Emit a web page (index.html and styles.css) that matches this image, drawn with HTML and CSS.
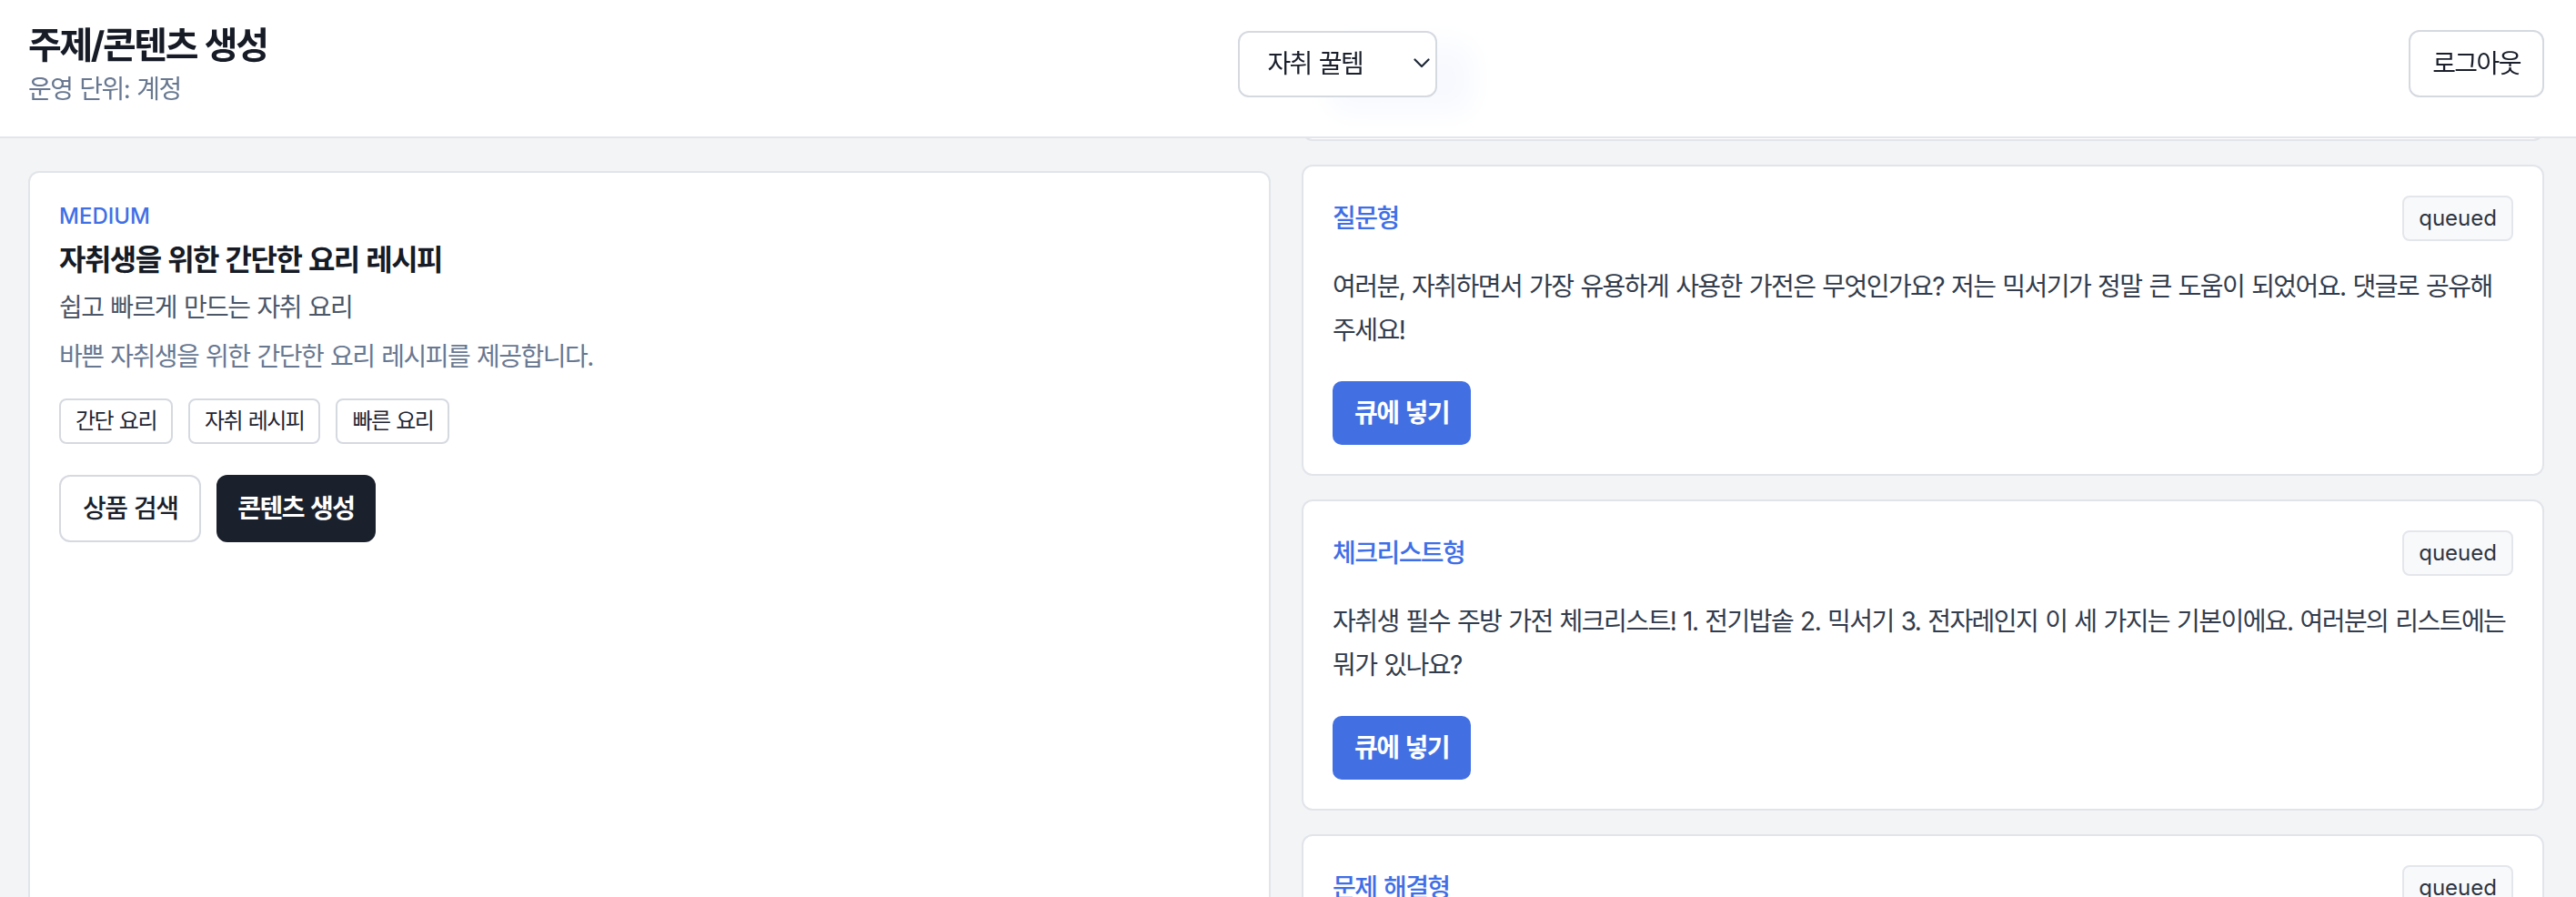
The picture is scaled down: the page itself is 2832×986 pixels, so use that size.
FILE: index.html
```html
<!DOCTYPE html>
<html lang="ko">
<head>
<meta charset="utf-8">
<title>주제/콘텐츠 생성</title>
<link rel="stylesheet" href="styles.css">
</head>
<body>
<header class="topbar">
  <div class="brand">
    <h1 class="page-title">주제/콘텐츠 생성</h1>
    <p class="page-meta">운영 단위: 계정</p>
  </div>
  <div class="picker">
    <select class="picker-select">
      <option>자취 꿀템</option>
    </select>
    <svg class="picker-caret" width="18" height="11" viewBox="0 0 18 11" aria-hidden="true"><path d="M1.5 1.5 9 9l7.5-7.5" fill="none" stroke="#1f2937" stroke-width="2.2" stroke-linecap="round" stroke-linejoin="round"/></svg>
  </div>
  <button class="btn btn-outline">로그아웃</button>
</header>

<main class="workspace">
  <section class="panel">
    <div class="level">MEDIUM</div>
    <h2 class="topic-title">자취생을 위한 간단한 요리 레시피</h2>
    <p class="topic-sub">쉽고 빠르게 만드는 자취 요리</p>
    <p class="topic-desc">바쁜 자취생을 위한 간단한 요리 레시피를 제공합니다.</p>
    <ul class="tags">
      <li class="tag">간단 요리</li>
      <li class="tag">자취 레시피</li>
      <li class="tag">빠른 요리</li>
    </ul>
    <div class="panel-actions">
      <button class="btn btn-outline btn-medium">상품 검색</button>
      <button class="btn btn-dark">콘텐츠 생성</button>
    </div>
  </section>

  <section class="feed">
    <article class="idea">
      <div class="idea-actions idea-actions-only"><button class="btn btn-primary">큐에 넣기</button></div>
    </article>

    <article class="idea">
      <div class="idea-head">
        <span class="idea-type">질문형</span>
        <span class="status">queued</span>
      </div>
      <p class="idea-text">여러분, 자취하면서 가장 유용하게 사용한 가전은 무엇인가요? 저는 믹서기가 정말 큰 도움이 되었어요. 댓글로 공유해 주세요!</p>
      <div class="idea-actions"><button class="btn btn-primary">큐에 넣기</button></div>
    </article>

    <article class="idea">
      <div class="idea-head">
        <span class="idea-type">체크리스트형</span>
        <span class="status">queued</span>
      </div>
      <p class="idea-text">자취생 필수 주방 가전 체크리스트! 1. 전기밥솥 2. 믹서기 3. 전자레인지 이 세 가지는 기본이에요. 여러분의 리스트에는 뭐가 있나요?</p>
      <div class="idea-actions"><button class="btn btn-primary">큐에 넣기</button></div>
    </article>

    <article class="idea">
      <div class="idea-head">
        <span class="idea-type">문제 해결형</span>
        <span class="status">queued</span>
      </div>
      <div class="idea-actions"><button class="btn btn-primary">큐에 넣기</button></div>
    </article>
  </section>
</main>
</body>
</html>
```

FILE: styles.css
```css
* {
  box-sizing: border-box;
}

html,
body {
  margin: 0;
  height: 100%;
}

body {
  font-family: "Inter", "Noto Sans CJK KR", sans-serif;
  background: #f3f4f6;
  color: #111827;
  letter-spacing: -1.55px;
  word-spacing: 1.6px;
  word-break: keep-all;
  overflow: hidden;
}

/* ---------- top bar ---------- */
.topbar {
  position: sticky;
  top: 0;
  z-index: 10;
  height: 152px;
  display: flex;
  align-items: center;
  justify-content: space-between;
  padding: 0 35px 10px 31px;
  background: rgba(255, 255, 255, 0.95);
  backdrop-filter: blur(16px);
  border-bottom: 2px solid #e3e5ea;
}

.page-title {
  margin: 0;
  font-size: 40px;
  line-height: 56px;
  font-weight: 700;
  letter-spacing: -2.4px;
  color: #161b26;
}

.page-meta {
  margin: 0;
  font-size: 28px;
  line-height: 40px;
  color: #687891;
}

.picker {
  position: relative;
}

.picker-select {
  appearance: none;
  -webkit-appearance: none;
  display: block;
  width: 219px;
  height: 73px;
  margin: 0;
  padding: 0 40px 0 30px;
  font-family: inherit;
  font-size: 28px;
  line-height: 40px;
  letter-spacing: inherit;
  word-spacing: inherit;
  color: #1a1f2b;
  background: #ffffff;
  border: 2px solid #d5d9e0;
  border-radius: 12px;
}

.picker-caret {
  position: absolute;
  right: 8px;
  top: 30px;
  pointer-events: none;
}

/* ---------- buttons ---------- */
.btn {
  font-family: inherit;
  font-size: 28px;
  line-height: 40px;
  letter-spacing: inherit;
  word-spacing: inherit;
  margin: 0;
  cursor: pointer;
  border-radius: 12px;
}

.btn-outline {
  padding: 15px 24px;
  background: #ffffff;
  color: #1a1f2b;
  border: 2px solid #d5d9e0;
  font-weight: 400;
}

.btn-medium {
  font-weight: 500;
}

.btn-dark {
  padding: 15px 21px;
  background: #1b212c;
  color: #ffffff;
  border: 2px solid #1b212c;
  font-weight: 600;
}

.btn-primary {
  padding: 15px 24px;
  background: #4270e3;
  color: #ffffff;
  border: 0;
  border-radius: 10px;
  font-weight: 600;
}

/* ---------- layout ---------- */
.workspace {
  display: grid;
  grid-template-columns: 1fr 1fr;
  column-gap: 34px;
  align-items: start;
  padding: 36px 35px 0 31px;
}

/* ---------- left panel ---------- */
.panel {
  min-height: 900px;
  padding: 32px;
  background: #ffffff;
  border: 2px solid #e1e4e9;
  border-radius: 12px;
}

.level {
  font-size: 24px;
  line-height: 32px;
  font-weight: 500;
  letter-spacing: 0;
  color: #3f6fe6;
}

.topic-title {
  margin: 8px 0 0;
  font-size: 32px;
  line-height: 48px;
  font-weight: 700;
  color: #161b26;
}

.topic-sub {
  margin: 8px 0 0;
  font-size: 28px;
  line-height: 40px;
  color: #4b5769;
}

.topic-desc {
  margin: 14px 0 0;
  font-size: 28px;
  line-height: 40px;
  color: #687891;
}

.tags {
  list-style: none;
  margin: 26px 0 0;
  padding: 0;
  display: flex;
  flex-wrap: wrap;
  gap: 17px;
}

.tag {
  padding: 7px 16px;
  font-size: 24px;
  line-height: 32px;
  color: #1f2633;
  background: #ffffff;
  border: 2px solid #d5d9e0;
  border-radius: 8px;
}

.panel-actions {
  margin-top: 34px;
  display: flex;
  gap: 17px;
}

/* ---------- right feed ---------- */
.feed {
  display: flex;
  flex-direction: column;
  gap: 26px;
  margin-top: -171px;
}

.idea {
  padding: 32px;
  background: #ffffff;
  border: 2px solid #e1e4e9;
  border-radius: 12px;
}

.idea-head {
  display: flex;
  align-items: center;
  justify-content: space-between;
}

.idea-type {
  font-size: 28px;
  line-height: 40px;
  font-weight: 500;
  color: #3f6fe6;
}

.status {
  padding: 7px 16px;
  font-size: 24px;
  line-height: 32px;
  letter-spacing: 0;
  word-spacing: 0;
  color: #2d3542;
  background: #f8f9fb;
  border: 2px solid #e3e6eb;
  border-radius: 8px;
}

.idea-text {
  margin: 26px 0 0;
  font-size: 28px;
  line-height: 48px;
  color: #323c4c;
}

.idea-actions {
  margin-top: 32px;
  display: flex;
}

.idea-actions-only {
  margin-top: 0;
}
```
